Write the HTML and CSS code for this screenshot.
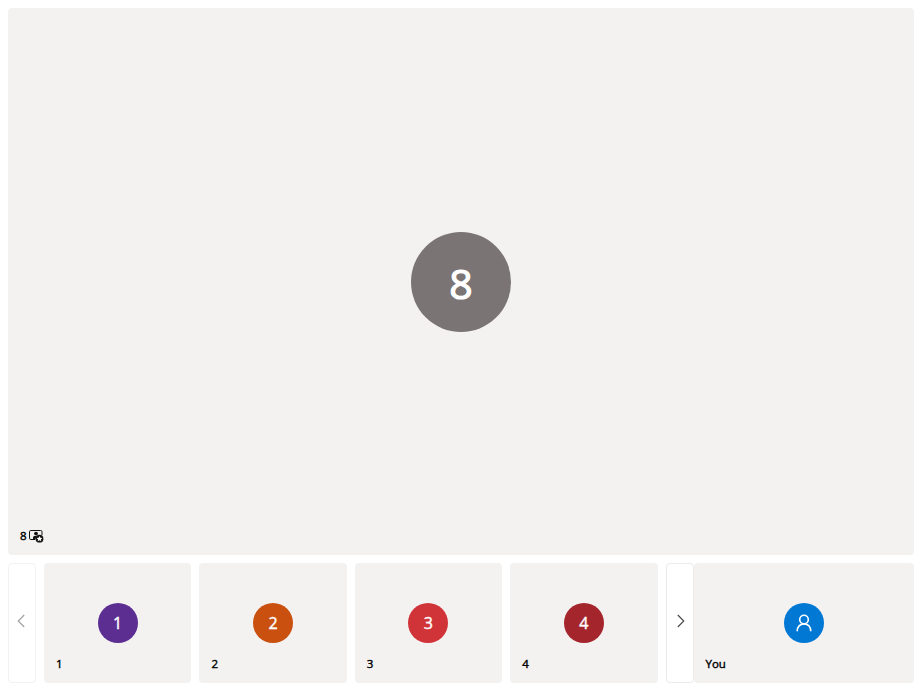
FILE: index.html
```html
<!DOCTYPE html>
<html lang="en">
<head>
<meta charset="utf-8">
<title>Video gallery</title>
<link rel="stylesheet" href="styles.css">
</head>
<body>
<main class="gallery">
  <section class="tile tile-main">
    <div class="avatar avatar-large grey"><span>8</span></div>
    <div class="label"><span>8</span>
      <svg class="spotlight" viewBox="0 0 16 14" width="16" height="14" fill="none" stroke="#111">
        <path d="M7 10.5H2.8Q1.5 10.5 1.5 9.2V2.8Q1.5 1.5 2.8 1.5H12.7Q14 1.5 14 2.8V6"/>
        <circle cx="8" cy="4.6" r="1.9" fill="#111" stroke="none"/>
        <path d="M5 10.5V8.6Q5 7.1 6.4 7.1H8.6L7.4 10.5Z" fill="#111" stroke="none"/>
        <circle cx="11.5" cy="9.7" r="3.9" fill="#111" stroke="none"/>
        <path d="M11.5 7l.85 1.8 2 .25-1.45 1.35.4 1.95-1.8-1-1.8 1 .4-1.95-1.45-1.35 2-.25z" fill="#fff" stroke="none"/>
      </svg>
    </div>
  </section>
  <div class="strip">
    <button class="nav disabled" aria-label="Previous"><svg viewBox="0 0 8 14" width="8" height="14"><path d="M7.2 1L1.2 7l6 6"/></svg></button>
    <div class="people">
      <section class="tile"><div class="avatar purple"><span>1</span></div><div class="label">1</div></section>
      <section class="tile"><div class="avatar orange"><span>2</span></div><div class="label">2</div></section>
      <section class="tile"><div class="avatar red"><span>3</span></div><div class="label">3</div></section>
      <section class="tile"><div class="avatar dark-red"><span>4</span></div><div class="label">4</div></section>
    </div>
    <button class="nav" aria-label="Next"><svg viewBox="0 0 8 14" width="8" height="14"><path d="M.8 1l6 6-6 6"/></svg></button>
    <section class="tile tile-local">
      <div class="avatar blue">
        <svg viewBox="0 0 16 18" width="16" height="18" fill="none" stroke="#fff" stroke-width="1.6"><circle cx="8" cy="5.5" r="4.3"/><path d="M1.2 17.2C1.2 12.8 4 9.9 8 9.9s6.8 2.9 6.8 7.3"/></svg>
      </div>
      <div class="label">You</div>
    </section>
  </div>
</main>
</body>
</html>
```
FILE: styles.css
```css
* { box-sizing: border-box; }
body {
  margin: 0;
  background: #fff;
  color: #000;
  font-family: "Open Sans", "Noto Sans", sans-serif;
}
.gallery {
  display: flex;
  flex-direction: column;
  gap: 8px;
  height: 691px;
  padding: 8px;
}
.tile {
  display: grid;
  place-items: center;
  background: #f3f2f1;
  border-radius: 4px;
  min-width: 0;
}
.tile > * { grid-area: 1 / 1; }
.tile-main { flex: 1; }
.label {
  place-self: end start;
  display: flex;
  align-items: center;
  gap: 2px;
  padding: 0 0 11px 12px;
  font-size: 11.5px;
  line-height: 16px;
  -webkit-text-stroke: 0.4px currentColor;
}
.avatar {
  display: flex;
  align-items: center;
  justify-content: center;
  width: 40px;
  height: 40px;
  border-radius: 50%;
  color: #fff;
  font-size: 16px;
  line-height: 40px;
  -webkit-text-stroke: 0.4px currentColor;
}
.avatar-large {
  width: 100px;
  height: 100px;
  font-size: 41px;
  line-height: 100px;
  -webkit-text-stroke-width: 1.2px;
}
.avatar-large span { padding-top: 2px; }
.grey { background: #7a7574; }
.purple { background: #5c2e91; }
.orange { background: #ca5010; }
.red { background: #d13438; }
.dark-red { background: #a4262c; }
.blue { background: #0078d4; }
.strip {
  display: flex;
  height: 120px;
}
.people {
  display: grid;
  grid-template-columns: repeat(4, 1fr);
  gap: 8px;
  flex: 1;
  margin: 0 8.5px 0 8px;
}
.nav {
  display: flex;
  align-items: center;
  justify-content: center;
  width: 28px;
  padding: 0 0 4px 1px;
  border: 1px solid #edebe9;
  border-radius: 4px;
  background: #fff;
}
.nav path { fill: none; stroke: #444; stroke-width: 1.1; }
.nav.disabled { padding: 0 2px 4px 0; border-color: #f3f2f1; }
.nav.disabled path { stroke: #a19f9d; }
.tile-local { width: 220px; }
.tile-local .label { padding-left: 11.5px; }
.spotlight { margin-left: -0.5px; }
```
